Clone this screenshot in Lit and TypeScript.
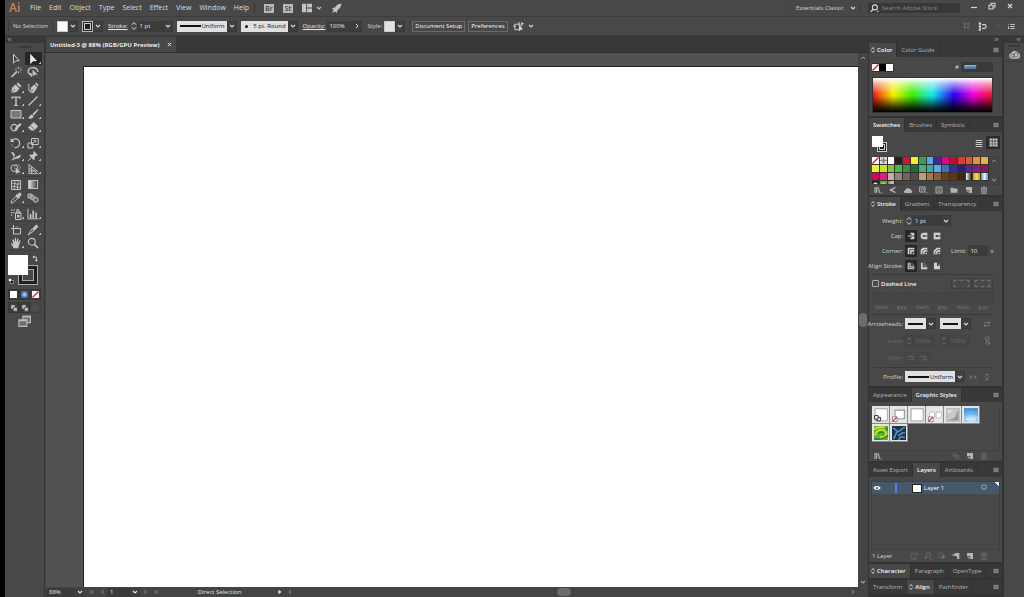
import { LitElement, html, css, svg, nothing } from "lit";
import { customElement, property, state } from "lit/decorators.js";
import { classMap } from "lit/directives/class-map.js";

/* Icon drawings, all on a 12 x 12 grid. "currentColor" is the only ink. */
const ICONS: Record<string, unknown> = {
  select: svg`<path d="M3.5 1.2v9l2.3-2.3 3.4-.3z" fill="none" stroke="currentColor"/>`,
  direct: svg`<path d="M3.2 .8v10.4l2.8-2.9 4-.3z" fill="currentColor"/>`,
  wand: svg`<path d="M1.5 11l5.6-5.6" stroke="currentColor" stroke-width="1.6"/><path d="M8.5.8v2M8.5 5.5v2M5 3.8h1.6M10 3.8h1.8M6 1.4l1 1M11 1.4l-1 1M11 6.4l-1-1" stroke="currentColor" stroke-width=".9"/>`,
  lasso: svg`<path d="M4 8.400C1.600 7.800.800 6.200 1.200 4.600 1.800 2.400 4.600 1.400 7 1.800s4.200 2 3.800 4M4 8.400c-1 .6-1.200-.8-.4-.8s1.200 2 .2 3" fill="none" stroke="currentColor" stroke-width="1.400"/><path d="M5.600 3.400v7.200l2-1.800h3z" fill="currentColor"/>`,
  pen: svg`<path d="M1 11l1.200-5.500L5.500 2.500l4 4-3 3.500z" fill="currentColor"/><path d="M6.500 2L8 .500l3.500 3.500-1.500 1.500z" fill="currentColor"/><path d="M1.200 10.800l3.600-3.600" stroke="#4a4a4a" stroke-width=".8"/>`,
  curve: svg`<path d="M3 11l1-5.500L7.400 2.600l2.800 2.800L7.400 10z" fill="currentColor"/><path d="M8 2L9.400.6l2.200 2.600L10.600 4.600z" fill="currentColor"/><path d="M1 2c2 1 .4 4 .8 6s2.600 3 5 2.600" fill="none" stroke="currentColor"/><path d="M3.200 10.800l3-3.400" stroke="#4a4a4a" stroke-width=".8"/>`,
  type: svg`<path d="M1.500 1.500h9v2.600h-1l-.4-1.300H6.700v6.900l1.300.4v.9H4v-.9l1.300-.4V2.800H2.900l-.4 1.300h-1z" fill="currentColor"/>`,
  line: svg`<path d="M1.500 10.500l9-9" stroke="currentColor" stroke-width="1.200"/>`,
  rect: svg`<path d="M1 2.500h10v7.500H1z" fill="#777" stroke="currentColor"/>`,
  brush: svg`<path d="M11.200.8L5.400 6l1.400 1.400L11.400 2z" fill="currentColor"/><path d="M4.800 6.400c-2 .2-1.600 2.600-3.800 3.400 1.400 1.600 5.400 1.400 5.400-1.800z" fill="currentColor"/>`,
  shaper: svg`<circle cx="4.200" cy="6.600" r="3.200" fill="none" stroke="currentColor" stroke-width="1.200"/><path d="M4.400 9l.8-2.200L10 2l1.600 1.400L6.800 8.200z" fill="currentColor"/>`,
  eraser: svg`<path d="M6.600 1l4.600 4.200-4 4.400H4L1 6.600z" fill="currentColor"/><path d="M3.400 4.600l4.200 4" stroke="#4a4a4a" stroke-width=".8"/>`,
  rotate: svg`<path d="M2 3.400A4.400 4.400 0 1 1 4.600 10.600" fill="none" stroke="currentColor" stroke-width="1.200"/><path d="M.6 1v4h4z" fill="currentColor"/><path d="M1.600 7.400l.4 1 1 1.200" stroke="currentColor" fill="none" stroke-dasharray="1 .8"/>`,
  scale: svg`<path d="M4.500 1.500h6.800v6H4.500zM1 6h4.800v5H1z" fill="none" stroke="currentColor"/><path d="M5 7l3.500-3.500M6.500 3.300h2.300v2.300" fill="none" stroke="currentColor" stroke-width=".9"/>`,
  width: svg`<path d="M1 2.200c4-.8 3 3.600 5.600 4.200S9 3.600 11 5.400c-1 .6-.6 3-3.400 3S4 9.600 1.400 10.600c-.2-1.200 2-1.400 2.200-3S2.600 4.400 1 2.200z" fill="currentColor"/><circle cx="5" cy="6.400" r="1" fill="#4a4a4a"/>`,
  pin: svg`<path d="M6.800 1l4.200 4.200-1.200.6-.6-.4-1.600 1.800.2 2.200-1 .8-4.600-4.600 1-1 2 .2 1.600-1.600-.6-1z" fill="currentColor"/><path d="M4.400 7.600L1.200 10.800" stroke="currentColor"/>`,
  shapebuild: svg`<circle cx="4.400" cy="5.200" r="3.400" fill="none" stroke="currentColor"/><circle cx="7.400" cy="4.400" r="2.800" fill="none" stroke="currentColor" stroke-dasharray="1 .7"/><path d="M5.800 4.600v6.600l2-1.800h2.800z" fill="currentColor"/>`,
  perspective: svg`<path d="M2 1v10M4.600 3v8M2 1.600l9 7M2 5l8 4.600M2 8h6.600M2 10.600h9.400" fill="none" stroke="currentColor" stroke-width=".9"/>`,
  mesh: svg`<path d="M1.500 1.500h9v9h-9z" fill="none" stroke="currentColor"/><path d="M1.500 4.800c3-2 5 2 9-.4M1.500 8c3-2 6 1.600 9 0M4.400 1.500c2 3-1.600 5.500 0 9M7.800 1.500c1.400 3-1.600 5.500 0 9" fill="none" stroke="currentColor" stroke-width=".9"/>`,
  eyedrop: svg`<path d="M1 11l.6-2.200L6 4.400 7.800 6.200 3.200 10.600z" fill="none" stroke="currentColor"/><path d="M5.400 3.400L6.600 2.200l.8.6C8.400 1 10 .4 11 1.200s.4 2.600-1.600 3.600l.6.800L8.800 6.800z" fill="currentColor"/>`,
  blend: svg`<path d="M1 2h4v4H1z" fill="#888" stroke="currentColor" stroke-width=".8"/><rect x="3.600" y="3.600" width="4.200" height="4.200" rx="1.400" fill="#8a8a8a" stroke="currentColor" stroke-width=".8"/><circle cx="8.800" cy="7.800" r="2.400" fill="#666" stroke="currentColor"/>`,
  spray: svg`<path d="M5.500 5h5.500v6.500H5.500zM6.800 3h3v2h-3z" fill="none" stroke="currentColor"/><path d="M7 7h2.500v2.500H7zM1 1.500h1.300v1.300H1zM3.500 1.500h1.300v1.300H3.500zM1 4h1.300v1.300H1zM1 6.500h1.300v1.300H1zM3 4h1.300v1.300H3zM6.500 1h2v1.500h-2z" fill="currentColor"/>`,
  graph: svg`<path d="M1 .8v10h10.500" fill="none" stroke="currentColor"/><path d="M2.800 6h1.600v4H2.800zM5.400 2.500H7V10H5.400zM8.300 4.500h1.600V10H8.300z" fill="currentColor"/>`,
  artboard: svg`<path d="M3.500 1v8.500M1 4.500h2.500M3.500 4.500h7v5.500h-7z" fill="none" stroke="currentColor"/><path d="M5.500 3h3" stroke="currentColor" stroke-dasharray="1 .8"/>`,
  slice: svg`<path d="M1 11l4-6 2 1.800z" fill="none" stroke="currentColor"/><path d="M5.400 4.400L9.400.6 11.400 2.600 7.800 6.600z" fill="currentColor"/>`,
  hand: svg`<path d="M3.600 11.200C3 9 1.200 8 .8 6.400c.8-.6 1.600.2 2.400 1L2.400 2.800c.2-.8 1-.6 1.300 0L4.800 5.500 4.700 1.300c.2-.8 1.200-.8 1.300 0l.4 4L7.300 1.700c.3-.7 1.200-.5 1.200.2L8 5.900l1.400-2.500c.5-.6 1.200-.1 1 .6L8.800 9l-.6 2.200z" fill="currentColor"/>`,
  zoom: svg`<circle cx="4.800" cy="4.800" r="3.400" fill="none" stroke="currentColor" stroke-width="1.100"/><path d="M7.400 7.400l3.600 3.600" stroke="currentColor" stroke-width="1.600"/>`,
  swap: svg`<path d="M2.500 3.500H7.500V9" fill="none" stroke="currentColor" stroke-width="1.400"/><path d="M4 .8v5.400L.8 3.500zM4.800 8h5.400l-2.700 3.400z" fill="currentColor"/>`,
  defaults: svg`<path d="M5 5h6v6H5z" fill="#111" stroke="#ddd"/><path d="M1 1h6v6H1z" fill="#fff" stroke="#222"/>`,
  chev: svg`<path d="M2 4l4 4 4-4" fill="none" stroke="currentColor" stroke-width="2.200"/>`,
  chevup: svg`<path d="M2 8l4-4 4 4" fill="none" stroke="currentColor" stroke-width="2"/>`,
  chevright: svg`<path d="M4 2l4 4-4 4" fill="none" stroke="currentColor" stroke-width="2"/>`,
  chevleft: svg`<path d="M8 2L4 6l4 4" fill="none" stroke="currentColor" stroke-width="1.800"/>`,
  step: svg`<path d="M2.500 4.200L6 1l3.500 3.200M2.500 7.800L6 11l3.500-3.200" fill="none" stroke="currentColor" stroke-width="1.500"/>`,
  diamond: svg`<path d="M3 4.800L6 1l3 3.800M3 7.200L6 11l3-3.800" fill="none" stroke="currentColor" stroke-width="1.500"/>`,
  lefts: svg`<path d="M6 2.500L2.500 6 6 9.500M10.500 2.500L7 6l3.500 3.500" fill="none" stroke="currentColor" stroke-width="1.800"/>`,
  rights: svg`<path d="M1.500 2.500L5 6 1.500 9.500M6 2.500L9.500 6 6 9.500" fill="none" stroke="currentColor" stroke-width="1.800"/>`,
  menu: svg`<path d="M1 1.500h10v9H1z" fill="#6d6d6d"/><path d="M1 3h10M1 6h10M1 9h10" stroke="currentColor" stroke-width="1.300"/>`,
  close: svg`<path d="M2 2l8 8M10 2l-8 8" stroke="currentColor" stroke-width="2.200"/>`,
  min: svg`<path d="M0 9h12" stroke="currentColor" stroke-width="2.400"/>`,
  restore: svg`<path d="M1.500 5h6v5.500h-6zM4.500 5V1.800h6v5.700H7.500" fill="none" stroke="currentColor" stroke-width="1.600"/>`,
  layout: svg`<path d="M0 1h5v10H0zM6 1h6v4.400H6zM6 6.600h6V11H6z" fill="currentColor"/>`,
  rocket: svg`<path d="M11.500.5C8 .8 5.600 2.600 4.400 4.800L1 5.800 2.800 7.500 1 11l3.400-1.600L6.200 11l1-3.400C9.800 6 11.200 3.600 11.500.5z" fill="currentColor"/>`,
  search: svg`<circle cx="6.500" cy="4.500" r="3.300" fill="none" stroke="currentColor" stroke-width="1.500"/><path d="M4.200 7L1 10.500" stroke="currentColor" stroke-width="1.700"/><path d="M8.500 9h3.500l-1.700 2z" fill="currentColor"/>`,
  isolate: svg`<path d="M2 3.500h5.500v6H2zM0 5.500h3M6.500 1v3M9 3h3M9.500 1v5" fill="none" stroke="currentColor"/><path d="M6.500 4v7.500l1.800-1.900 2.700-.2z" fill="currentColor"/>`,
  dots: svg`<path d="M1 1h4v4H1zM7 1h4v4H7zM1 7h4v4H1zM7 7h4v4H7z" fill="currentColor"/>`,
  snap: svg`<path d="M1 .5h3v3H1zM1 4.500h3v3H1zM1 8.500h3v3H1z" fill="currentColor"/><path d="M5.500 3.500h3c3 0 3 5 0 5h-3" fill="none" stroke="currentColor" stroke-width="1.600"/>`,
  list: svg`<path d="M4 2.500h7.500M4 6h7.500M4 9.500h7.500M1 2v1M1 5.500v5" stroke="currentColor" stroke-width="1.500"/>`,
  rows: svg`<path d="M1 2.250h10M1 5.250h10M1 8.250h10M1 11.250h10" stroke="currentColor" stroke-width="1.500"/>`,
  grid: svg`<path d="M.8.800h3v3h-3zM4.600.800h3v3h-3zM8.400.800h3v3h-3zM.8 4.600h3v3h-3zM4.600 4.600h3v3h-3zM8.400 4.600h3v3h-3zM.8 8.400h3v3h-3zM4.600 8.400h3v3h-3zM8.400 8.400h3v3h-3z" fill="currentColor"/>`,
  lib: svg`<path d="M1.500 1.500v9M4 1.500v9M6 1.800l2.600 8.500" stroke="currentColor" stroke-width="1.700"/><path d="M10 9.500h1.600V11H10z" fill="currentColor"/>`,
  share: svg`<path d="M9.500 2L3 6l6.500 4" fill="none" stroke="currentColor" stroke-width="2"/><circle cx="3" cy="6" r="1.900" fill="currentColor"/>`,
  cloud: svg`<path d="M2 10.500C-1 10-.4 6.400 2.300 6.400c.2-3.600 4.700-4.600 6-1.800 1.800-.6 3 .8 2.800 2.200 2 .6 1.400 3.700-.4 3.700z" fill="currentColor"/>`,
  kinds: svg`<path d="M1 1.500h8V9H1z" fill="none" stroke="currentColor" stroke-width="1.400"/><path d="M3 3.500h2v2H3zM6 3.500h2v2H6zM3 6.500h2v1H3zM10 9.500h1.800V11H10z" fill="currentColor"/>`,
  options: svg`<path d="M1.500 1.500h9v9h-9z" fill="none" stroke="currentColor" stroke-width="1.400"/><path d="M3.500 4h5M3.500 6h5M3.500 8h5" stroke="currentColor"/>`,
  folder: svg`<path d="M.8 2.500h4l1 1.200h5.400V10H.8z" fill="currentColor"/>`,
  fresh: svg`<path d="M1.500 1.500h9v9H6.500V6.500h-5z" fill="currentColor"/><path d="M2 7.500l3.500 3v-3z" fill="currentColor"/>`,
  sublayer: svg`<path d="M4 1.500h7v9H7.500V6.500H4z" fill="currentColor"/><path d="M3.800 4.500L.8 3v3.500z" fill="currentColor"/><path d="M2 4.500h3" stroke="currentColor" stroke-width="1.400"/>`,
  trash: svg`<path d="M2.500 4h7l-.5 7H3z" fill="none" stroke="currentColor" stroke-width="1.400"/><path d="M1.500 2.800h9M4.500 1.300h3M5 5.500V9.500M7 5.500V9.500" stroke="currentColor" stroke-width="1.100"/>`,
  unlink: svg`<rect x="1" y="3.500" width="4.500" height="3.500" rx="1.500" fill="none" stroke="currentColor" stroke-width="1.200"/><rect x="6.500" y="5" width="4.500" height="3.500" rx="1.500" fill="none" stroke="currentColor" stroke-width="1.200"/><path d="M2.500 1l7 10" stroke="currentColor" stroke-width="1.100"/>`,
  chain: svg`<rect x="4" y=".8" width="4" height="4.600" rx="1.800" fill="none" stroke="currentColor" stroke-width="1.200"/><rect x="4" y="6.600" width="4" height="4.600" rx="1.800" fill="none" stroke="currentColor" stroke-width="1.200"/><path d="M1.500 2.500l9 8" stroke="currentColor" stroke-width="1.100"/>`,
  capbutt: svg`<path d="M5 1h6v10H5V8.500h2v-5H5z" fill="currentColor"/><path d="M1 6h8" stroke="currentColor" stroke-width="1.400"/><path d="M7 6h4" stroke="#333" stroke-width="1.200"/>`,
  capround: svg`<path d="M6 1h5v10H6A5 5 0 0 1 6 1z" fill="currentColor"/><path d="M5 6h6" stroke="#444" stroke-width="1.600"/><circle cx="5.500" cy="6" r="1.500" fill="#444"/>`,
  capsquare: svg`<path d="M1 1h10v10H1z" fill="currentColor"/><path d="M5 6h6" stroke="#444" stroke-width="1.600"/><path d="M4 4.500h3v3H4z" fill="#444"/>`,
  miter: svg`<path d="M1 1h10v6H7v4H1z" fill="currentColor"/><path d="M4 11V4H11" fill="none" stroke="#333" stroke-width="1.100"/><path d="M8.500 8.500H11V11H8.500z" fill="currentColor"/>`,
  roundj: svg`<path d="M11 1H6C3 1 1 3 1 6v5h6V7h4z" fill="currentColor"/><path d="M4 11V6.500L6.500 4H11" fill="none" stroke="#444" stroke-width="1.100"/><path d="M8.500 8.500H10.500V10.500H8.500z" fill="currentColor"/>`,
  bevel: svg`<path d="M11 1H5.500L1 5.500V11h6V7h4z" fill="currentColor"/><path d="M4 11V6.500L6.500 4H11" fill="none" stroke="#444" stroke-width="1.100"/><path d="M8.500 8.500H10.500V10.500H8.500z" fill="currentColor"/>`,
  alignc: svg`<path d="M1 1h4.500v5.500H11V11H1z" fill="currentColor"/><path d="M3.200 1v7.800h8" fill="none" stroke="#333"/><path d="M7.500 1v3.500h4" fill="none" stroke="currentColor" stroke-dasharray="1.500 1"/>`,
  aligni: svg`<path d="M1.500 1H4v7h7v3H1.500z" fill="currentColor"/><path d="M6.500 2v4h4" fill="none" stroke="currentColor" stroke-dasharray="1.500 1"/>`,
  aligno: svg`<path d="M1.500 1H6v5h4.500v5h-9z" fill="currentColor"/><path d="M7.500 4.500h3" fill="none" stroke="currentColor"/>`,
  dash1: svg`<path d="M-2 5V2.500H1M3.500 2.500h5M11 2.500h3V5M-2 7v2.500h1.500M14 7v2.500h-1.500" fill="none" stroke="currentColor"/>`,
  dash2: svg`<path d="M-2 5V2.500H1M4 2.500h4M11 2.500h3V5M-2 7v2.500H1M4 9.500h4M11 9.500h3V7" fill="none" stroke="currentColor"/>`,
  exchange: svg`<path d="M1 4h8M3 8.500h8" stroke="currentColor" stroke-width="1.200"/><path d="M8 1.500v5L11.500 4zM4 6v5L.5 8.500z" fill="currentColor"/>`,
  tip: svg`<path d="M1 4h7M4 8.500h7" stroke="currentColor" stroke-width="1.200"/><path d="M7 2v4l3-2z" fill="currentColor"/>`,
  flipx: svg`<path d="M1 2v8l4-4zM11 2v8L7 6z" fill="currentColor"/><path d="M6 1v10" stroke="currentColor" stroke-width=".8"/>`,
  flipy: svg`<path d="M2 1h8L6 5zM2 11h8L6 7z" fill="currentColor"/><path d="M1 6h10" stroke="currentColor" stroke-width=".8"/>`,
  eye: svg`<path d="M.5 6C3 2 9 2 11.500 6 9 10 3 10 .5 6z" fill="currentColor"/><circle cx="6" cy="6" r="2" fill="#46596c"/><circle cx="6" cy="5.600" r=".8" fill="currentColor"/>`,
  target: svg`<circle cx="6" cy="6" r="4.500" fill="none" stroke="currentColor" stroke-width="1.400"/>`,
  exportit: svg`<path d="M6 2.500H1.500v8h8V7M7 1.500h4v4M11 1.500L5 7.500" fill="none" stroke="currentColor" stroke-width="1.200"/>`,
  clip: svg`<path d="M1 1.500h7v7H1z" fill="none" stroke="currentColor"/><circle cx="7.500" cy="7.500" r="3" fill="currentColor"/>`,
  first: svg`<path d="M2 2v8M10 2v8L4.500 6z" fill="currentColor" stroke="currentColor"/>`,
  prev: svg`<path d="M9 1.500v9L3 6z" fill="currentColor"/>`,
  next: svg`<path d="M3 1.500v9L9 6z" fill="currentColor"/>`,
  last: svg`<path d="M10 2v8M2 2v8l5.500-4z" fill="currentColor" stroke="currentColor"/>`,
  cc: svg`<path d="M3.200 10.600A3.200 3.200 0 0 1 2.600 4.300 4.200 4.200 0 0 1 9.800 4 3.400 3.400 0 0 1 9 10.600z" fill="currentColor"/><circle cx="4" cy="7.300" r="1.900" fill="none" stroke="#484848" stroke-width=".8"/><circle cx="7.600" cy="6.600" r="2.400" fill="none" stroke="#484848" stroke-width=".8"/>`,
  mode: svg`<circle cx="4.500" cy="4.500" r="3.200" fill="currentColor"/><path d="M5 5h6v6H5z" fill="currentColor" stroke="#3a3a3a"/>`,
  modein: svg`<circle cx="6" cy="6" r="3.800" fill="none" stroke="currentColor"/><circle cx="6" cy="6" r="1.400" fill="currentColor"/>`,
  screens: svg`<path d="M4.500 1h7v6h-7z" fill="#707070" stroke="currentColor"/><path d="M.8 4.500h7.400v6H.8z" fill="#707070" stroke="currentColor"/><path d="M.8 5.200h7.400M4.500 1.800h7" stroke="currentColor"/>`,
  none: svg`<path d="M0 0h12v12H0z" fill="#fff"/><path d="M.8 11.200L11.200.8" stroke="#e0202c" stroke-width="2.400"/>`,
  register: svg`<path d="M0 0h12v12H0z" fill="#ddd"/><circle cx="6" cy="6" r="3" fill="none" stroke="#666"/><path d="M6 0v12M0 6h12" stroke="#666"/>`,
  /* graphic style thumbnails */
  gdefault: svg`<path d="M0 0h12v12H0z" fill="#e4e4e4"/><path d="M1 .6h10.400v10.400H1z" fill="#fff" stroke="#999" stroke-width=".7"/><path d="M2.500 8h3v3h-3z" fill="#fff" stroke="#222" stroke-width=".8"/><path d="M.5 6.500h3v3h-3z" fill="#fff" stroke="#222" stroke-width=".8"/>`,
  gshadow: svg`<path d="M0 0h12v12H0z" fill="#e4e4e4"/><path d="M2.600 1.800h8v7.400h-8z" fill="#fff" stroke="#999"/><path d="M.4 7.600h4v4h-4z" fill="#fff" stroke="#555" stroke-width=".5"/><path d="M.6 11.400l3.600-3.600" stroke="#e0202c"/>`,
  gplain: svg`<path d="M0 0h12v12H0z" fill="#e4e4e4"/><path d="M.9.700h10.400v10.400H.9z" fill="#fff" stroke="#999" stroke-width=".8"/>`,
  gsplit: svg`<path d="M0 0h12v12H0z" fill="#e8e8e8"/><path d="M1.500 3.500h4v5h-4zM7 3.500h4.500v5H7z" fill="#fff" stroke="#aaa" stroke-width=".6"/><path d="M.4 7.600h4v4h-4z" fill="#fff" stroke="#555" stroke-width=".5"/><path d="M.6 11.400l3.600-3.600" stroke="#e0202c"/>`,
  gmetal: svg`<path d="M0 0h12v12H0z" fill="#bdbdbd"/><path d="M1.500 1.500h9v9h-9z" fill="#c8c8c8"/><path d="M1.500 10.500V5L7 1.500H1.500z" fill="#e2e2e2"/><path d="M10.500 1.500v9h-9l6-2z" fill="#949494"/>`,
  gsky: svg`<path d="M0 0h12v12H0z" fill="#4a97dc"/><path d="M0 4c4-2 8-2 12 0v8H0z" fill="#6fb1e8"/><path d="M0 7.500c4-2.500 8-2.500 12 0V12H0z" fill="#97cbf1"/><ellipse cx="6" cy="9.800" rx="4.500" ry="2.200" fill="#c4e6f9"/>`,
  gleaf: svg`<path d="M0 0h12v12H0z" fill="#62b62c"/><path d="M0 3c3-3 6-2 9-2M1 8C2 3 8 1.500 10 5s-2 6-5 4" fill="none" stroke="#d8de2c" stroke-width="1.500"/><path d="M4 6.500c1-2 4-1.500 4 0M0 11c3 .5 8 1 12-3M11 1v3" fill="none" stroke="#1d8434" stroke-width="1.300"/>`,
  gvine: svg`<path d="M0 0h12v12H0z" fill="#1e3347"/><path d="M1 11c3-2 1-5 4-6s3-3 6-4M5 5C3 4 3 2 1 2M5 8c3 0 3-3 6-2M6 12c0-3 3-3 5-2" fill="none" stroke="#5b93c4" stroke-width="1.300"/>`,
};

@customElement("ai-icon")
export class AiIcon extends LitElement {
  @property() name = "";
  @property({ type: Number }) size = 8;
  static styles = css`
    :host { display: inline-flex; flex: none; align-items: center; justify-content: center; }
    svg { display: block; overflow: visible; }
  `;
  render() {
    return html`<svg width=${this.size} height=${this.size} viewBox="0 0 12 12" aria-hidden="true">${ICONS[this.name] ?? nothing}</svg>`;
  }
}

@customElement("ai-panel")
export class AiPanel extends LitElement {
  @property({ type: Array }) tabs: string[] = [];
  @state() private chosen = -1;
  @property({ type: Number }) active = 0;
  @property({ type: Boolean }) cycle = false;
  static styles = css`
    :host { display: block; font: 400 6px/8px "Open Sans", "Noto Sans", sans-serif; color: #b4b4b4; }
    .tabs { display: flex; height: 14px; background: #383838; }
    .tab {
      all: unset; box-sizing: border-box; display: flex; align-items: center; gap: 1px; padding: 0 4px;
      border-right: 1px solid #303030; white-space: nowrap; cursor: default;
    }
    .on { background: #484848; color: #f6f6f6; font-weight: 600; }
    .cyc { padding-left: 1px; }
    .more { all: unset; margin-left: auto; padding: 0 3px; display: flex; align-items: center; color: #8a8a8a; }
    .body { background: #484848; color: #d4d4d4; }
  `;
  render() {
    const current = this.chosen < 0 ? this.active : this.chosen;
    return html`
      <div class="tabs" role="tablist">
        ${this.tabs.map((t, i) => {
          const on = i === current;
          const cyc = on && this.cycle;
          return html`<button role="tab" aria-selected=${on} class=${classMap({ tab: true, on, cyc })} @click=${() => (this.chosen = i)}>
            ${cyc ? html`<ai-icon name="diamond" size="6"></ai-icon>` : nothing}${t}
          </button>`;
        })}
        <button class="more" aria-label="Panel menu"><ai-icon name="menu" size="6"></ai-icon></button>
      </div>
      <div class="body"><slot></slot></div>
    `;
  }
}

const MENUS = ["File", "Edit", "Object", "Type", "Select", "Effect", "View", "Window", "Help"];

const TOOLS: [string, string][][] = [
  [["select", "Selection"], ["direct", "Direct Selection"], ["wand", "Magic Wand"], ["lasso", "Lasso"]],
  [["pen", "Pen"], ["curve", "Curvature"], ["type", "Type"], ["line", "Line Segment"], ["rect", "Rectangle"], ["brush", "Paintbrush"], ["shaper", "Shaper"], ["eraser", "Eraser"]],
  [["rotate", "Rotate"], ["scale", "Scale"], ["width", "Width"], ["pin", "Puppet Warp"], ["shapebuild", "Shape Builder"], ["perspective", "Perspective Grid"]],
  [["mesh", "Mesh"], ["gradient", "Gradient"], ["eyedrop", "Eyedropper"], ["blend", "Blend"]],
  [["spray", "Symbol Sprayer"], ["graph", "Column Graph"]],
  [["artboard", "Artboard"], ["slice", "Slice"], ["hand", "Hand"], ["zoom", "Zoom"]],
];
const PLAIN = ["select", "wand", "lasso", "curve", "mesh", "gradient", "blend", "artboard", "zoom"];

const SWATCHES = [
  "none", "register", "#ffffff", "#222222", "#d90f2e", "#f6f21e", "#34a24a", "#58a8ea", "#392c92", "#e2008f", "#b0182e", "#e03a3c", "#e0562e", "#ee9030", "#f0ae44",
  "#f2ee3a", "#d2de2a", "#8cc23c", "#4cb848", "#309244", "#226a3a", "#40b272", "#40aa9c", "#62a6e2", "#4470b8", "#383090", "#2c2262", "#661c92", "#8a1a8c", "#92145c",
  "#cc0a5c", "#e01a80", "#c0b49c", "#98847a", "#706658", "#544a46", "#c49c70", "#a47a50", "#84603e", "#64401e", "#5c3814", "#3a2814",
  "linear-gradient(90deg,#fff,#111)", "linear-gradient(90deg,#f08a1c,#f8dc3c,#f08a1c)", "linear-gradient(90deg,#4a90d0,#eaf6ff,#5098d4)",
  "radial-gradient(circle at 50% 60%,#fff 30%,#222 60%)", "radial-gradient(circle at 50% 60%,#fff 15%,#60b030 50%)", "linear-gradient(120deg,#7a6a4a,#d8ccb0,#6a5a40)",
];

const STYLES: [string, string][] = [
  ["gdefault", "Default"], ["gshadow", "Shadow"], ["gplain", "Plain"], ["gsplit", "Split"],
  ["gmetal", "Metal"], ["gsky", "Sky"], ["gleaf", "Foliage"], ["gvine", "Vines"],
];

@customElement("app-root")
export class AppRoot extends LitElement {
  @state() private tool = "direct";

  static styles = css`
    :host { display: flex; height: 100vh; overflow: hidden; background: #383838; color: #d8d8d8; font: 400 6px/8px "Open Sans", "Noto Sans", sans-serif; }
    * { box-sizing: border-box; }
    button, input, select { font: inherit; color: inherit; margin: 0; padding: 0; border: 0; border-radius: 0; background: none; min-width: 0; appearance: none; outline: none; }
    button { display: inline-flex; align-items: center; justify-content: center; }
    .edge { flex: 0 0 5px; background: #000; }
    .app { flex: 1; min-width: 0; display: flex; flex-direction: column; }

    /* menu bar */
    .menubar { display: flex; align-items: center; height: 17px; background: #484848; border-bottom: 1px solid #3c3c3c; }
    .logo { width: 19px; padding-left: 4px; font: 600 12px/16px "Open Sans", sans-serif; color: #c8845a; }
    .menus { display: flex; gap: 8px; padding-left: 6px; font-size: 7px; color: #dedede; }
    .rule { width: 1px; height: 10px; background: #3a3a3a; }
    .apps { display: flex; align-items: center; gap: 9px; margin-left: 5px; color: #c4c4c4; }
    .badge { width: 10px; height: 9px; background: #b8b8b8; color: #444; font-weight: 600; font-size: 7px; line-height: 9px; }
    .pair { gap: 4px; }
    .spacer { flex: 1; }
    .work { width: 70px; gap: 6px; justify-content: flex-start; padding-left: 6px; border-left: 1px solid #3c3c3c; }
    .search { display: flex; align-items: center; gap: 3px; width: 92px; height: 10px; margin: 0 5px 0 8px; padding-left: 2px; background: #383838; }
    .search input { flex: 1; }
    .search input::placeholder { color: #8c8c8c; }
    .win { width: 18px; height: 12px; color: #d8d8d8; }
    .wins { display: flex; align-self: flex-start; padding-right: 5px; }

    /* control bar */
    .controls { display: flex; align-items: center; height: 19px; padding: 0 9px 0 3px; background: #484848; border-bottom: 1px solid #3c3c3c; }
    .controls > * { flex: none; }
    .controls > .spacer { flex: 1; }
    .nosel { width: 43px; padding-left: 4px; }
    .well { display: flex; height: 11px; margin-left: 4px; }
    .lab + .well { margin-left: 2px; }
    .chip { width: 11px; background: #fff; border: 1px solid #c8c8c8; }
    .chip.ring { background: #222; border-color: #bbb; }
    .chip.ring::after { content: ""; width: 5px; height: 5px; border: 1px solid #ccc; background: #222; }
    .chip.pale { background: #e2e2e2; }
    .drop { width: 10px; height: 11px; background: #3f3f3f; border: 1px solid #383838; color: #dadada; }
    .u { text-decoration: underline; color: #e6e6e6; }
    .lab { margin-left: 5px; }
    .stepper { width: 8px; height: 11px; border: 1px solid #404040; color: #ccc; }
    .num { width: 25px; height: 11px; padding-left: 2px; background: #3c3c3c; color: #e8e8e8; }
    .combo { display: grid; grid-template-columns: 1fr 10px; height: 11px; margin-left: 4px; }
    .combo select { grid-area: 1 / 1; background: #e0e0e0; color: #111; text-align-last: right; padding-right: 2px; }
    .combo .drop { grid-area: 1 / 2; display: flex; align-items: center; justify-content: center; }
    .combo .ink { grid-area: 1 / 1; align-self: center; justify-self: start; margin-left: 3px; height: 2px; background: #111; pointer-events: none; }
    .combo.uni { width: 60px; } .combo.uni .ink { width: 21px; }
    .combo.brush { width: 57px; } .combo.brush .ink { width: 3px; height: 3px; border-radius: 2px; margin-left: 4px; }
    .btn { height: 11px; padding: 0 2px; border: 1px solid #6a6a6a; color: #fff; }
    .setup { display: flex; gap: 3px; margin-left: 4px; padding-left: 2px; border-left: 1px solid #3c3c3c; }
    .iso { margin-left: 5px; gap: 4px; }
    .rtools { display: flex; gap: 8px; align-items: center; }

    /* below the bars */
    .main { flex: 1; min-height: 0; display: flex; }
    .tools { flex: 0 0 40px; background: #484848; border-right: 1px solid #363636; }
    .thead { display: flex; align-items: center; height: 7px; padding-left: 2px; background: #383838; color: #b0b0b0; }
    .grip { width: 12px; height: 2px; margin: 3px auto 4px; background: #383838; }
    .tgroup { display: grid; grid-template-columns: 17px 17px; grid-auto-rows: 13px; justify-content: center; margin: 0 2px 1px; padding-bottom: 1px; border-bottom: 1px solid #3f3f3f; }
    .tool { color: #c6c6c6; }
    .tool.on { background: #262626; color: #f0f0f0; border-radius: 1px; }
    .tool.sub::after { content: ""; align-self: flex-end; width: 2px; height: 2px; margin: 0 -2px 1px 0; background: linear-gradient(135deg, transparent 30%, #bbb 30%); }
    .grad { width: 10px; height: 9px; border: 1px solid #bbb; background: linear-gradient(90deg, #ddd, #444); }
    .paint { position: relative; height: 34px; margin: 4px 4px 0 3px; }
    .fillbox, .strokebox { position: absolute; width: 20px; height: 20px; }
    .fillbox { left: 0; top: 0; background: #fff; }
    .strokebox { left: 10px; top: 10px; background: #202020; border: 1px solid #aaa; }
    .strokebox::after { content: ""; width: 10px; height: 10px; background: #484848; border: 1px solid #aaa; }
    .swapb { position: absolute; right: 1px; top: 0; }
    .defb { position: absolute; left: 0; bottom: 5px; }
    .modes { display: grid; grid-template-columns: repeat(3, 11px); justify-content: center; height: 13px; }
    .modes button { background: #3d3d3d; border: 1px solid #353535; height: 11px; color: #bcbcbc; }
    .modes .off { color: #606060; background: none; border-color: #404040; }
    .mini { width: 7px; height: 7px; background: #fff; }
    .mini.ball { background: radial-gradient(circle, #a8ccf0 15%, #2c62a8 70%); }
    .screen { display: flex; margin: 0 auto; color: #bbb; }

    .doc { flex: 1; min-width: 0; display: flex; flex-direction: column; }
    .doctabs { display: flex; height: 16px; padding: 1px 0 0 1px; background: #383838; }
    .doctab { display: flex; align-items: center; gap: 8px; padding: 0 4px; background: #484848; color: #ececec; font-weight: 700; }
    .view { flex: 1; min-height: 0; display: flex; border-top: 1px solid #303030; }
    .canvas { flex: 1; min-width: 0; padding: 13px 0 0 37px; background: #525252; border-left: 1px solid #444; }
    .artboard { height: 100%; background: #fff; border: 1px solid #222; border-width: 1px 0 0 1px; }
    .vbar { display: flex; flex-direction: column; align-items: center; justify-content: space-between; flex: 0 0 10px; background: #444; color: #a0a0a0; padding: 2px 0; }
    .thumb { width: 8px; height: 14px; border-radius: 4px; background: #6c6c6c; }
    .status { display: flex; align-items: center; height: 10px; padding-left: 1px; background: #444; color: #e4e4e4; }
    .status .zoomf { width: 29px; height: 9px; padding-left: 3px; background: #3a3a3a; }
    .status .pagef { width: 23px; height: 9px; padding-left: 3px; background: #3a3a3a; }
    .status .d { width: 10px; height: 9px; background: #3f3f3f; }
    .nav { width: 11px; color: #6c6c6c; }
    .mode { flex: 0 0 115px; text-align: center; }
    .hbar { flex: 1; display: flex; align-items: center; justify-content: space-between; padding: 0 12px 0 4px; color: #999; }
    .hbar .thumb { width: 14px; height: 8px; margin-right: 16px; }

    /* panel dock */
    .dock { flex: 0 0 135px; min-width: 0; padding: 0 1px; background: #333; }
    .dhead { display: flex; align-items: center; justify-content: flex-end; height: 7px; padding-right: 3px; background: #383838; color: #b0b0b0; }
    .stack { display: flex; flex-direction: column; gap: 2px; }
    .side { flex: 0 0 21px; border-left: 1px solid #333; background: #484848; }
    .sideicon { width: 100%; height: 15px; color: #c4c4c4; border-bottom: 1px solid #3a3a3a; }
    .side .grip { margin: 2px auto 0; }

    .color { padding: 5px 9px 3px 3px; }
    .crow { display: flex; align-items: center; height: 10px; margin-bottom: 5px; }
    .c3 { display: flex; border: 1px solid #333; border-left: 0; }
    .sq { width: 7px; height: 7px; background: #fff; } .sq.k { background: #000; }
    .hash { margin-left: auto; width: 6px; }
    .hex { width: 32px; height: 10px; padding-left: 3px; background: #3a3a3a; color: #fff; border-radius: 1px; }
    .spectrum { height: 36px; border: 1px solid #333; background:
      linear-gradient(180deg, #fff 0, rgba(255,255,255,.55) 18%, rgba(255,255,255,0) 48%, rgba(0,0,0,0) 52%, rgba(0,0,0,.75) 85%, #000 100%),
      linear-gradient(90deg, #f01414, #f6f000 17%, #3cee00 33%, #10e8f0 50%, #2a00f0 68%, #f000e0 84%, #f01428); }

    .sw { padding: 4px 2px 0 3px; }
    .swhead { display: flex; align-items: flex-start; height: 20px; }
    .two { position: relative; width: 17px; height: 17px; margin-right: auto; }
    .two i { position: absolute; left: 5px; top: 6px; width: 10px; height: 10px; background: #222; border: 1px solid #ccc; box-shadow: inset 0 0 0 1px #222, inset 0 0 0 2px #ccc; }
    .two b { position: absolute; left: 0; top: 0; width: 11px; height: 11px; background: #fff; }
    .vt { width: 14px; height: 13px; color: #ccc; } .vt.on { background: #2c2c2c; }
    .swbox { display: flex; height: 29px; border: 1px solid #404040; border-left: 0; background: #444; overflow: hidden; }
    .swgrid { flex: 0 1 117px; display: grid; grid-template-columns: repeat(15, 1fr); grid-auto-rows: 8px; align-content: start; }
    .swatch { border: solid #333; border-width: 0 1px 1px 0; overflow: hidden; }
    .sbar { flex: 1; display: flex; flex-direction: column; align-items: center; justify-content: space-between; padding: 1px 0; color: #888; }
    .foot { display: flex; align-items: center; height: 10px; color: #b4b4b4; }
    .foot.even { justify-content: space-between; padding: 0 12px 0 2px; }
    .dim { color: #6a6a6a; }

    .strk { padding: 2px 9px 1px 2px; }
    .row { display: flex; align-items: center; height: 15px; }
    .row.tall { height: 17px; }
    .row label, .row .k { flex: 0 0 32px; min-width: 0; margin-right: 2px; display: flex; justify-content: flex-end; white-space: nowrap; }
    .row .w { width: 28px; }
    .row .num, .row .drop { flex: none; }
    .seg { display: flex; gap: 1px; }
    .seg button { width: 12px; height: 12px; border: 1px solid #424242; color: #d0d0d0; }
    .seg .on { background: #262626; border-color: #262626; }
    .row .lim { flex: 0 0 auto; margin-left: 8px; }
    .row .limit { width: 20px; }
    .x { margin-left: 2px; }
    .hr { border-top: 1px solid #3a3a3a; margin: 1px 0 0 1px; }
    .dashed { display: flex; align-items: center; height: 17px; }
    .dashed label { display: flex; align-items: center; gap: 2px; margin: 0 auto 0 1px; font-weight: 600; color: #eee; }
    .dashed input { width: 7px; height: 7px; border: 1px solid #aaa; border-radius: 1px; }
    .dashed input:checked { background: #ccc; }
    .db { width: 21px; height: 11px; border: 1px solid #404040; color: #7c7c7c; }
    .gaps { display: grid; grid-template-columns: repeat(6, 1fr); gap: 1px; margin-left: 1px; }
    .gaps label { display: grid; grid-template-rows: 11px 10px; text-align: center; color: #747474; }
    .gaps input { width: 100%; height: 11px; background: #444; border: 1px solid #414141; }
    .arrow { grid-template-columns: 21px 10px; margin: 0 4px 0 0; }
    .arrow .ink { width: 15px; }
    .end { margin-left: auto; color: #7c7c7c; width: 12px; }
    .flips { display: flex; gap: 6px; margin-left: auto; padding-right: 2px; }
    .row .combo { flex: none; }
    .row .combo.uni, .row .combo.arrow { margin-left: 0; }
    .faint { color: #6a6a6a; }
    .faint .stepper, .faint .num { color: #6a6a6a; background: #454545; }
    .faint .num { width: 22px; margin-right: 5px; }
    .faint .seg button { color: #6a6a6a; }

    .gs { padding: 4px 2px 0 3px; }
    .gsbox { display: flex; flex-wrap: wrap; align-content: flex-start; height: 45px; padding-right: 8px; border: 1px solid #404040; border-width: 0 1px 1px 0; }
    .gstyle { width: 18px; height: 18px; border: 1px solid #888; border-width: 0 1px 1px 0; background: #e4e4e4; }
    .gfoot { justify-content: flex-end; gap: 6px; padding: 0 12px 0 2px; }
    .gfoot :first-child { margin-right: auto; }

    .ly { padding: 4px 2px 0; }
    .layers { height: 69px; border: 1px solid #404040; }
    .layer { display: flex; align-items: center; justify-content: flex-start; width: 100%; height: 12px; background: #46596c; color: #fff; padding-left: 1px; }
    .bar { width: 2px; height: 10px; margin: 0 15px 0 14px; background: #5878f0; }
    .lthumb { width: 10px; height: 9px; margin-right: 2px; background: #fff; border: 1px solid #222; }
    .tgt { margin-left: auto; color: #c8c8c8; }
    .corner { align-self: flex-start; width: 4px; height: 4px; margin-left: 8px; background: linear-gradient(45deg, transparent 50%, #eee 50%); }
    .lfoot { gap: 6px; padding: 0 12px 0 1px; height: 12px; }
    .lfoot span { margin-right: auto; color: #d8d8d8; }
  `;

  private icon(name: string, size = 8) {
    return html`<ai-icon name=${name} size=${size}></ai-icon>`;
  }
  private ib(name: string, label: string, cls = "", size = 8) {
    return html`<button class=${cls} aria-label=${label}>${this.icon(name, size)}</button>`;
  }
  private drop(label: string, name = "chev") {
    return this.ib(name, label, "drop", 6);
  }
  private lineCombo(id: string, label: string, kind: string, text: string) {
    return html`<span class="combo ${kind}">
      <select id=${id} aria-label=${label}><option>${text}</option></select>
      <span class="ink"></span><span class="drop">${this.icon("chev", 6)}</span>
    </span>`;
  }

  private menubar() {
    return html`<header class="menubar">
      <span class="logo">Ai</span>
      <nav class="menus">${MENUS.map((m) => html`<button>${m}</button>`)}</nav>
      <div class="apps">
        <span class="rule"></span>
        <button class="badge" aria-label="Bridge">Br</button>
        <button class="badge" aria-label="Stock">St</button>
        <button class="pair" aria-label="Arrange documents">${this.icon("layout", 10)}${this.icon("chev", 6)}</button>
        ${this.ib("rocket", "GPU performance", "", 11)}
      </div>
      <span class="spacer"></span>
      <button class="work">Essentials Classic ${this.icon("chev", 6)}</button>
      <span class="rule"></span>
      <label class="search">${this.icon("search", 9)}<input aria-label="Search Adobe Stock" placeholder="Search Adobe Stock" /></label>
      <div class="wins">
        ${this.ib("min", "Minimize", "win", 6)}${this.ib("restore", "Restore", "win", 8)}${this.ib("close", "Close", "win", 6)}
      </div>
    </header>`;
  }

  private controls() {
    return html`<section class="controls">
      <span class="rule"></span><span class="nosel">No Selection</span><span class="rule"></span>
      <span class="well"><button class="chip" aria-label="Fill"></button>${this.drop("Fill options")}</span>
      <span class="well"><button class="chip ring" aria-label="Stroke color"></button>${this.drop("Stroke options")}</span>
      <label class="u lab" for="cw">Stroke:</label>
      <span class="well">${this.ib("step", "Step weight", "stepper", 8)}<input id="cw" class="num" value="1 pt" />${this.drop("Weights")}</span>
      ${this.lineCombo("cprof", "Width profile", "uni", "Uniform")}
      ${this.lineCombo("cbrush", "Brush", "brush", "5 pt. Round")}
      <label class="u lab" for="cop">Opacity:</label>
      <span class="well"><input id="cop" class="num" value="100%" />${this.drop("Opacity slider", "chevright")}</span>
      <span class="lab">Style:</span>
      <span class="well"><button class="chip pale" aria-label="Graphic style"></button>${this.drop("Graphic styles")}</span>
      <span class="setup"><button class="btn">Document Setup</button><button class="btn">Preferences</button></span>
      <button class="iso" aria-label="Isolate similar">${this.icon("isolate", 11)}${this.icon("chev", 6)}</button>
      <span class="spacer"></span>
      <span class="rtools"><span class="dim">${this.icon("dots", 7)}</span>${this.ib("snap", "Snap", "", 9)}<span class="dim">${this.icon("chev", 5)}</span>${this.ib("list", "Bar menu", "", 7)}</span>
    </section>`;
  }

  private toolbar() {
    return html`<aside class="tools">
      <div class="thead">${this.icon("lefts", 5)}</div>
      <div class="grip"></div>
      ${TOOLS.map((g) => html`<div class="tgroup">
        ${g.map(([id, label]) => html`<button aria-label=${label} class=${classMap({ tool: true, on: id === this.tool, sub: !PLAIN.includes(id) })} @click=${() => (this.tool = id)}>
          ${id === "gradient" ? html`<span class="grad"></span>` : this.icon(id, 12)}
        </button>`)}
      </div>`)}
      <div class="paint">
        <button class="strokebox" aria-label="Stroke"></button><button class="fillbox" aria-label="Fill"></button>
        ${this.ib("swap", "Swap", "swapb", 7)}${this.ib("defaults", "Default colors", "defb", 6)}
      </div>
      <div class="modes">
        <button aria-label="Color"><span class="mini"></span></button><button aria-label="Gradient fill"><span class="mini ball"></span></button>${this.ib("none", "None", "", 7)}
      </div>
      <div class="modes">${this.ib("mode", "Draw normal", "", 8)}${this.ib("mode", "Draw behind", "", 8)}${this.ib("modein", "Draw inside", "off", 7)}</div>
      ${this.ib("screens", "Screen mode", "screen", 13)}
    </aside>`;
  }

  private document() {
    return html`<main class="doc">
      <div class="doctabs"><span class="doctab">Untitled-3 @ 88% (RGB/GPU Preview) ${this.ib("close", "Close document", "", 5)}</span></div>
      <div class="view">
        <div class="canvas"><div class="artboard"></div></div>
        <div class="vbar">${this.icon("chevup", 6)}<span class="thumb"></span>${this.icon("chev", 6)}</div>
      </div>
      <footer class="status">
        <input class="zoomf" aria-label="Zoom level" value="88%" />${this.ib("chev", "Zoom presets", "d", 6)}
        ${this.ib("first", "First artboard", "nav", 6)}${this.ib("prev", "Previous artboard", "nav", 6)}
        <input class="pagef" aria-label="Artboard number" value="1" />${this.ib("chev", "Artboards", "d", 6)}
        ${this.ib("next", "Next artboard", "nav", 6)}${this.ib("last", "Last artboard", "nav", 6)}
        <span class="mode">Direct Selection</span>
        ${this.ib("next", "Status menu", "", 6)}
        <span class="hbar">${this.icon("chevleft", 6)}<span class="thumb"></span>${this.icon("chevright", 6)}</span>
      </footer>
    </main>`;
  }

  private seg(items: string[], on = 0) {
    return html`<span class="seg">${items.map((n, i) => this.ib(n, n, i === on ? "on" : "", 8))}</span>`;
  }

  private dock() {
    return html`<aside class="dock">
      <div class="dhead">${this.icon("rights", 5)}</div>
      <div class="stack">
        <ai-panel .tabs=${["Color", "Color Guide"]} cycle>
          <div class="color">
            <div class="crow">
              <span class="c3">${this.icon("none", 7)}<span class="sq k"></span><span class="sq"></span></span>
              <label class="hash" for="hex">#</label><input id="hex" class="hex" value="ffffff" />
            </div>
            <div class="spectrum"></div>
          </div>
        </ai-panel>
        <ai-panel .tabs=${["Swatches", "Brushes", "Symbols"]}>
          <div class="sw">
            <div class="swhead"><span class="two"><i></i><b></b></span>${this.ib("rows", "List view", "vt", 8)}${this.ib("grid", "Thumbnail view", "vt on", 9)}</div>
            <div class="swbox">
              <div class="swgrid">${SWATCHES.map((c) =>
                c === "none" || c === "register"
                  ? html`<span class="swatch">${this.icon(c, 7)}</span>`
                  : html`<span class="swatch" style="background:${c}"></span>`)}</div>
              <span class="sbar">${this.icon("chevup", 6)}${this.icon("chev", 6)}</span>
            </div>
            <div class="foot even">
              ${[["lib", "Libraries"], ["share", "Themes"], ["cloud", "Add to library"], ["kinds", "Show kinds"], ["options", "Options"], ["folder", "New group"], ["fresh", "New swatch"], ["trash", "Delete"]].map(([n, l]) => this.ib(n, l))}
            </div>
          </div>
        </ai-panel>
        <ai-panel .tabs=${["Stroke", "Gradient", "Transparency"]} cycle>
          <div class="strk">
            <div class="row"><label for="sw">Weight:</label>${this.ib("step", "Step weight", "stepper", 8)}<input id="sw" class="num w" value="1 pt" />${this.drop("Weights")}</div>
            <div class="row"><span class="k">Cap:</span>${this.seg(["capbutt", "capround", "capsquare"])}</div>
            <div class="row"><span class="k">Corner:</span>${this.seg(["miter", "roundj", "bevel"])}<label class="lim" for="lim">Limit:</label><input id="lim" class="num limit" value="10" /><span class="x">x</span></div>
            <div class="row"><span class="k">Align Stroke:</span>${this.seg(["alignc", "aligni", "aligno"])}</div>
            <div class="hr"></div>
            <div class="dashed"><label><input type="checkbox" />Dashed Line</label>${this.ib("dash1", "Exact dashes", "db", 11)}${this.ib("dash2", "Aligned dashes", "db", 11)}</div>
            <div class="gaps">${["dash", "gap", "dash", "gap", "dash", "gap"].map((t) => html`<label><input disabled />${t}</label>`)}</div>
            <div class="hr"></div>
            <div class="row tall"><label for="a1">Arrowheads:</label>${this.lineCombo("a1", "Start arrowhead", "arrow", "")}${this.lineCombo("a2", "End arrowhead", "arrow", "")}${this.ib("exchange", "Swap arrowheads", "end", 8)}</div>
            <div class="row tall faint"><label for="s1">Scale:</label>${this.ib("step", "Step start", "stepper", 8)}<input id="s1" class="num" value="100%" disabled />${this.ib("step", "Step end", "stepper", 8)}<input class="num" aria-label="End scale" value="100%" disabled />${this.ib("chain", "Link scales", "end", 9)}</div>
            <div class="row tall faint"><span class="k">Align:</span>${this.seg(["tip", "tip"], -1)}</div>
            <div class="hr"></div>
            <div class="row tall"><label for="prof">Profile:</label>${this.lineCombo("prof", "Profile", "uni", "Uniform")}<span class="faint flips">${this.ib("flipx", "Flip along", "", 8)}${this.ib("flipy", "Flip across", "", 8)}</span></div>
          </div>
        </ai-panel>
        <ai-panel .tabs=${["Appearance", "Graphic Styles"]} active="1">
          <div class="gs">
            <div class="gsbox">${STYLES.map(([n, l]) => html`<button class="gstyle" aria-label=${l}>${this.icon(n, 14)}</button>`)}</div>
            <div class="foot gfoot">${this.ib("lib", "Libraries")}${this.ib("unlink", "Break link", "dim")}${this.ib("fresh", "New style")}${this.ib("trash", "Delete", "dim")}</div>
          </div>
        </ai-panel>
        <ai-panel .tabs=${["Asset Export", "Layers", "Artboards"]} active="1">
          <div class="ly">
            <div class="layers"><button class="layer">${this.icon("eye", 8)}<span class="bar"></span><span class="lthumb"></span>Layer 1<span class="tgt">${this.icon("target", 6)}</span><span class="corner"></span></button></div>
            <div class="foot lfoot"><span>1 Layer</span>${this.ib("exportit", "Export", "dim")}${this.ib("search", "Locate", "dim")}${this.ib("clip", "Mask", "dim")}${this.ib("sublayer", "New sublayer")}${this.ib("fresh", "New layer")}${this.ib("trash", "Delete", "dim")}</div>
          </div>
        </ai-panel>
        <ai-panel .tabs=${["Character", "Paragraph", "OpenType"]} cycle></ai-panel>
        <ai-panel .tabs=${["Transform", "Align", "Pathfinder"]} active="1" cycle></ai-panel>
      </div>
    </aside>`;
  }

  render() {
    return html`
      <div class="edge"></div>
      <div class="app">
        ${this.menubar()} ${this.controls()}
        <div class="main">
          ${this.toolbar()} ${this.document()} ${this.dock()}
          <aside class="side"><div class="dhead">${this.icon("lefts", 5)}</div><div class="grip"></div>${this.ib("cc", "Creative Cloud Libraries", "sideicon", 11)}</aside>
        </div>
      </div>
    `;
  }
}
